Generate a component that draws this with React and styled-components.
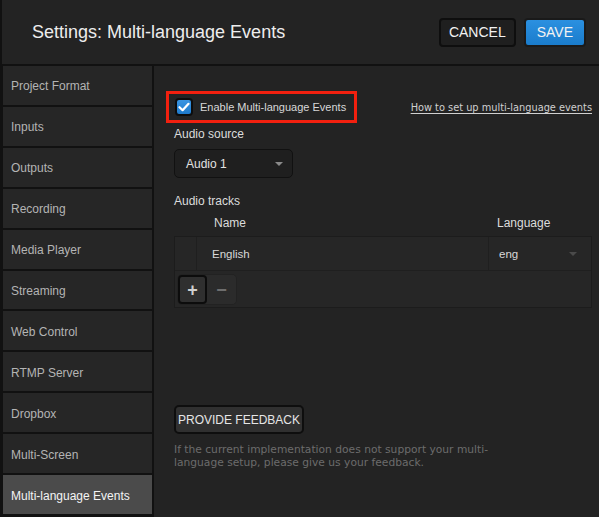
import React from 'react';
import styled, { createGlobalStyle } from 'styled-components';

const GlobalStyle = createGlobalStyle`
  html, body {
    margin: 0;
    padding: 0;
    background: #111;
  }
  * {
    box-sizing: border-box;
  }
`;

const sidebarTabs = [
  { id: 1, name: 'Project Format' },
  { id: 2, name: 'Inputs' },
  { id: 3, name: 'Outputs' },
  { id: 4, name: 'Recording' },
  { id: 5, name: 'Media Player' },
  { id: 6, name: 'Streaming' },
  { id: 7, name: 'Web Control' },
  { id: 8, name: 'RTMP Server' },
  { id: 9, name: 'Dropbox' },
  { id: 10, name: 'Multi-Screen' },
  { id: 11, name: 'Multi-language Events' }
];

const App = () => {
  const activeTab = 'Multi-language Events';

  return (
    <Window>
      <GlobalStyle />
      <Header>
        <h1>Settings: Multi-language Events</h1>
        <div className="actions">
          <HeaderButton>CANCEL</HeaderButton>
          <HeaderButton primary>SAVE</HeaderButton>
        </div>
      </Header>
      <Body>
        <Sidebar>
          {sidebarTabs.map((tab) => (
            <SidebarTab key={tab.id} active={activeTab === tab.name}>
              {tab.name}
            </SidebarTab>
          ))}
        </Sidebar>
        <Main>
          <div className="top_row">
            <Highlight>
              <Checkbox>
                <svg width="12" height="10" viewBox="0 0 12 10">
                  <path
                    d="M1.5 5.2 L4.6 8.2 L10.5 1.8"
                    fill="none"
                    stroke="#fff"
                    strokeWidth="2.2"
                    strokeLinecap="round"
                    strokeLinejoin="round"
                  />
                </svg>
              </Checkbox>
              <span>Enable Multi-language Events</span>
            </Highlight>
            <HelpLink>How to set up multi-language events</HelpLink>
          </div>

          <Label>Audio source</Label>
          <Select>
            <span>Audio 1</span>
            <Caret />
          </Select>

          <Label className="tracks">Audio tracks</Label>
          <TableHead>
            <span />
            <span className="name">Name</span>
            <span className="lang">Language</span>
          </TableHead>
          <TrackTable>
            <TrackRow>
              <div className="cell" />
              <div className="cell name">English</div>
              <div className="cell lang">
                eng
                <Caret dim />
              </div>
            </TrackRow>
            <div className="controls">
              <StepGroup>
                <StepButton pressed>+</StepButton>
                <StepButton>−</StepButton>
              </StepGroup>
            </div>
          </TrackTable>

          <FeedbackButton>PROVIDE FEEDBACK</FeedbackButton>
          <Note>
            If the current implementation does not support your multi-
            <br />
            language setup, please give us your feedback.
          </Note>
        </Main>
      </Body>
    </Window>
  );
};

export default App;

const Window = styled.div`
  width: 599px;
  height: 517px;
  display: flex;
  flex-direction: column;
  background: #111;
  font-family: 'Liberation Sans', Arial, sans-serif;
  overflow: hidden;
`;

const Header = styled.div`
  height: 66px;
  flex-shrink: 0;
  display: flex;
  align-items: center;
  justify-content: space-between;
  background: #232323;
  border-left: 2px solid #111;
  border-bottom: 2px solid #111;
  padding: 0 13px 0 30px;

  h1 {
    margin: 0;
    font-size: 18px;
    font-weight: 400;
    color: #ededed;
  }

  .actions {
    display: flex;
    gap: 8px;
  }
`;

const HeaderButton = styled.button`
  height: 29px;
  padding: 0 ${({ primary }) => (primary ? '11px' : '8px')};
  border-radius: 4px;
  border: 2px solid ${({ primary }) => (primary ? '#1a1a1a' : '#0e0e0e')};
  background: ${({ primary }) => (primary ? 'linear-gradient(#2b90e0, #1a7ccc)' : '#1f1f1f')};
  color: #f2f2f2;
  font-family: 'Liberation Sans', Arial, sans-serif;
  font-size: 14px;
  line-height: 1;
`;

const Body = styled.div`
  flex: 1;
  display: flex;
  min-height: 0;
`;

const Sidebar = styled.div`
  width: 154px;
  flex-shrink: 0;
  display: flex;
  flex-direction: column;
  gap: 2px;
  padding: 0 2px 3px 3px;
  background: #111;
`;

const SidebarTab = styled.div`
  flex: 1;
  display: flex;
  align-items: center;
  padding-left: 8px;
  padding-top: 2px;
  background: ${({ active }) => (active ? '#4b4b4b' : '#262626')};
  color: ${({ active }) => (active ? '#f4f4f4' : '#b4b4b4')};
  font-size: 12px;
`;

const Main = styled.div`
  flex: 1;
  background: #232323;
  padding: 25px 7px 0 20px;
  display: flex;
  flex-direction: column;
  align-items: flex-start;

  .top_row {
    align-self: stretch;
    display: flex;
    align-items: center;
    justify-content: space-between;
  }
`;

const Highlight = styled.div`
  display: flex;
  align-items: center;
  gap: 7px;
  height: 32px;
  margin-left: -8px;
  padding: 0 8px 0 6px;
  border: 3px solid #f2200f;
  color: #d8d8d8;
  font-size: 11px;
`;

const Checkbox = styled.div`
  width: 18px;
  height: 18px;
  border-radius: 4px;
  border: 2px solid #0d0d0d;
  background: linear-gradient(#3a95e2, #1e7acb);
  display: flex;
  align-items: center;
  justify-content: center;
`;

const HelpLink = styled.a`
  font-family: 'DejaVu Sans', Verdana, sans-serif;
  font-size: 9.8px;
  color: #d0d0d0;
  text-decoration: underline;
  text-underline-offset: 2px;
  margin-top: 1px;
`;

const Label = styled.div`
  margin-top: 4px;
  color: #dcdcdc;
  font-size: 12px;
  line-height: 14px;

  &.tracks {
    margin-top: 16px;
  }
`;

const Select = styled.div`
  margin-top: 8px;
  width: 119px;
  height: 29px;
  display: flex;
  align-items: center;
  justify-content: space-between;
  padding: 0 9px 0 11px;
  border-radius: 5px;
  border: 1px solid #111;
  background: #1f1f1f;
  color: #e2e2e2;
  font-size: 12px;
`;

const Caret = styled.span`
  width: 0;
  height: 0;
  border-left: 4px solid transparent;
  border-right: 4px solid transparent;
  border-top: 4px solid ${({ dim }) => (dim ? '#4a4a4a' : '#8a8a8a')};
`;

const TableHead = styled.div`
  align-self: stretch;
  display: grid;
  grid-template-columns: 23px 292px 1fr;
  margin-top: 8px;
  color: #dcdcdc;
  font-size: 12px;
  line-height: 14px;

  .name {
    padding-left: 17px;
  }
  .lang {
    padding-left: 8px;
  }
`;

const TrackTable = styled.div`
  align-self: stretch;
  margin-top: 6px;
  border: 1px solid #1c1c1c;
  background: #262626;

  .controls {
    padding: 3px 2px 2px;
  }
`;

const TrackRow = styled.div`
  display: grid;
  grid-template-columns: 22px 292px 1fr;
  height: 34px;
  border-bottom: 1px solid #1f1f1f;

  .cell {
    display: flex;
    align-items: center;
    color: #d8d8d8;
    font-size: 11.5px;
    border-right: 1px solid #1f1f1f;
  }
  .name {
    padding-left: 15px;
  }
  .lang {
    border-right: none;
    padding: 0 14px 0 10px;
    justify-content: space-between;
  }
`;

const StepGroup = styled.div`
  display: inline-flex;
  border-radius: 5px;
  background: #2b2b2b;
  border: 1px solid #222;
`;

const StepButton = styled.div`
  width: 29px;
  height: 29px;
  display: flex;
  align-items: center;
  justify-content: center;
  border-radius: ${({ pressed }) => (pressed ? '4px' : '0 4px 4px 0')};
  border: ${({ pressed }) => (pressed ? '2px solid #0c0c0c' : 'none')};
  background: ${({ pressed }) => (pressed ? '#2f2f2f' : '#2b2b2b')};
  color: ${({ pressed }) => (pressed ? '#d0d0d0' : '#6e6e6e')};
  font-size: 18px;
  font-weight: 700;
  line-height: 1;
`;

const FeedbackButton = styled.button`
  margin-top: 97px;
  height: 29px;
  padding: 0 2px;
  border-radius: 5px;
  border: 2px solid #0e0e0e;
  background: #303030;
  color: #e6e6e6;
  font-family: 'Liberation Sans', Arial, sans-serif;
  font-size: 12px;
`;

const Note = styled.p`
  margin: 9px 0 0;
  font-family: 'DejaVu Sans', Verdana, sans-serif;
  font-size: 10.7px;
  line-height: 13px;
  color: #6c6c6c;
`;
